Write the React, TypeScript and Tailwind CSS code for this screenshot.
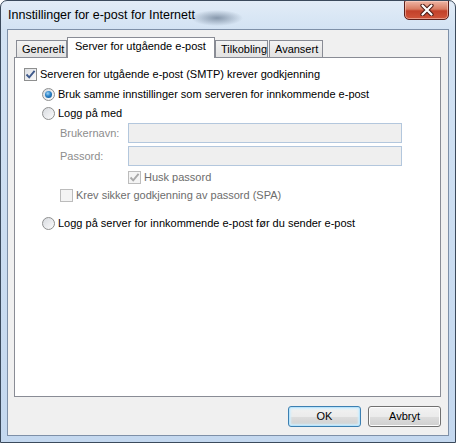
import React from "react";

type BoxProps = { checked?: boolean; disabled?: boolean };

const CheckBox = ({ checked, disabled }: BoxProps) => (
  <div
    className={`w-[13px] h-[13px] shrink-0 border flex items-center justify-center ${
      disabled ? "border-[#bcbcbc] bg-[#f4f4f4]" : "border-[#8e8f8f] bg-gradient-to-br from-[#dcdfe3] to-[#fbfbfb]"
    }`}
  >
    {checked && (
      <svg width="11" height="11" viewBox="0 0 11 11">
        <path
          d="M1.5 5.5 L4.2 8.3 L9.6 1.8"
          fill="none"
          stroke={disabled ? "#a9a9a9" : "#3f5a8c"}
          strokeWidth="1.9"
        />
      </svg>
    )}
  </div>
);

const Radio = ({ checked }: BoxProps) => (
  <div className="w-[13px] h-[13px] shrink-0 rounded-full border border-[#8e8f8f] bg-gradient-to-br from-[#d7dadf] to-[#fcfcfc] flex items-center justify-center">
    {checked && (
      <div className="w-[7px] h-[7px] rounded-full bg-[radial-gradient(circle_at_40%_35%,#9fd3f5_0%,#2a82c7_45%,#0c4d8c_100%)]" />
    )}
  </div>
);

const Tab = ({ label, active, width }: { label: string; active?: boolean; width: string }) => (
  <div
    className={`${width} flex items-start border-t border-x border-[#898c95] ${
      active
        ? "h-[21px] bg-white pt-[2px] pl-[7px] z-10"
        : "h-[17px] mb-[1px] bg-gradient-to-b from-[#f3f3f3] to-[#e2e2e2] pt-[2px] pl-[5px]"
    }`}
  >
    <span className="leading-[13px] text-[11px] text-black whitespace-nowrap">{label}</span>
  </div>
);

const Button = ({ label, isDefault }: { label: string; isDefault?: boolean }) => (
  <div
    className={`w-[73px] h-[21px] rounded-[3px] border flex items-center justify-center text-[11px] text-black bg-[linear-gradient(#f2f2f2_0%,#ebebeb_50%,#dddddd_51%,#cfcfcf_100%)] ${
      isDefault
        ? "border-[#3c7fb1] shadow-[inset_0_0_0_1px_#b9e4fb,inset_0_0_2px_2px_#d2eefc]"
        : "border-[#707070] shadow-[inset_0_0_0_1px_#fcfcfc]"
    }`}
  >
    {label}
  </div>
);

export default function App() {
  return (
    <div className="w-[456px] h-[443px] flex flex-col border border-[#3b4a5c] rounded-t-[7px] overflow-hidden bg-[linear-gradient(180deg,#e2ecf7_0px,#d2e2f3_30px,#c4d8ef_100%)] font-['Liberation_Sans',Arial,sans-serif]">
      {/* title bar */}
      <div className="h-[28px] flex items-start justify-between bg-[radial-gradient(ellipse_26px_8px_at_216px_17px,#8798ac_0%,transparent_100%)]">
        <div className="pl-[7px] pt-[7px] text-[12.5px] leading-[14px] text-black">Innstillinger for e-post for Internett</div>
        <div className="w-[45px] h-[20px] mt-[-1px] mr-[6px] rounded-b-[5px] rounded-tl-[2px] border border-[#5c1f1a] bg-[linear-gradient(#efb6a5_0%,#d97c62_45%,#c2412a_55%,#d0553a_100%)] shadow-[inset_0_0_0_1px_rgba(255,220,210,0.5)] flex items-center justify-center">
          <svg width="14" height="12" viewBox="0 0 14 12">
            <path d="M2.5 1.5 L11.5 10.5 M11.5 1.5 L2.5 10.5" stroke="#4a1a14" strokeWidth="4.2" strokeLinecap="round" />
            <path d="M2.5 1.5 L11.5 10.5 M11.5 1.5 L2.5 10.5" stroke="#ffffff" strokeWidth="2.2" strokeLinecap="round" />
          </svg>
        </div>
      </div>

      {/* client area */}
      <div className="mx-[6px] h-[407px] border border-[#7e90a8] bg-[#f0f0f0] flex flex-col pt-[7px] pl-[6px] pr-[7px]">
        <div className="flex items-end h-[21px] mb-[-1px] pl-[2px] relative">
          <Tab label="Generelt" width="w-[51px]" />
          <Tab label="Server for utgående e-post" active width="w-[148px]" />
          <Tab label="Tilkobling" width="w-[53px]" />
          <div className="w-[1px]" />
          <Tab label="Avansert" width="w-[54px]" />
        </div>

        <div className="h-[340px] border border-[#898c95] bg-white flex flex-col pl-[9px] text-[11px] leading-[13px]">
          <div className="mt-[10px] h-[13px] flex items-center gap-[3px]">
            <CheckBox checked />
            <span className="text-black whitespace-nowrap">Serveren for utgående e-post (SMTP) krever godkjenning</span>
          </div>
          <div className="mt-[7px] h-[13px] flex items-center gap-[3px] pl-[18px]">
            <Radio checked />
            <span className="text-black whitespace-nowrap">Bruk samme innstillinger som serveren for innkommende e-post</span>
          </div>
          <div className="mt-[6px] h-[13px] flex items-center gap-[3px] pl-[18px]">
            <Radio />
            <span className="text-black whitespace-nowrap">Logg på med</span>
          </div>
          <div className="mt-[3px] h-[20px] flex items-center pl-[36px]">
            <span className="w-[68px] text-[#8d8d8d]">Brukernavn:</span>
            <div className="w-[274px] h-[20px] border border-[#b3c7dd] bg-[#efefef]" />
          </div>
          <div className="mt-[3px] h-[20px] flex items-center pl-[36px]">
            <span className="w-[68px] text-[#8d8d8d]">Passord:</span>
            <div className="w-[274px] h-[20px] border border-[#b3c7dd] bg-[#efefef]" />
          </div>
          <div className="mt-[5px] h-[13px] flex items-center gap-[3px] pl-[104px]">
            <CheckBox checked disabled />
            <span className="text-[#6d6d6d] whitespace-nowrap">Husk passord</span>
          </div>
          <div className="mt-[5px] h-[13px] flex items-center gap-[3px] pl-[36px]">
            <CheckBox disabled />
            <span className="text-[#6d6d6d] whitespace-nowrap">Krev sikker godkjenning av passord (SPA)</span>
          </div>
          <div className="mt-[15px] h-[13px] flex items-center gap-[3px] pl-[18px]">
            <Radio />
            <span className="text-black whitespace-nowrap">Logg på server for innkommende e-post før du sender e-post</span>
          </div>
        </div>

        <div className="mt-[9px] flex justify-end gap-[7px]">
          <Button label="OK" isDefault />
          <Button label="Avbryt" />
        </div>
      </div>
    </div>
  );
}
